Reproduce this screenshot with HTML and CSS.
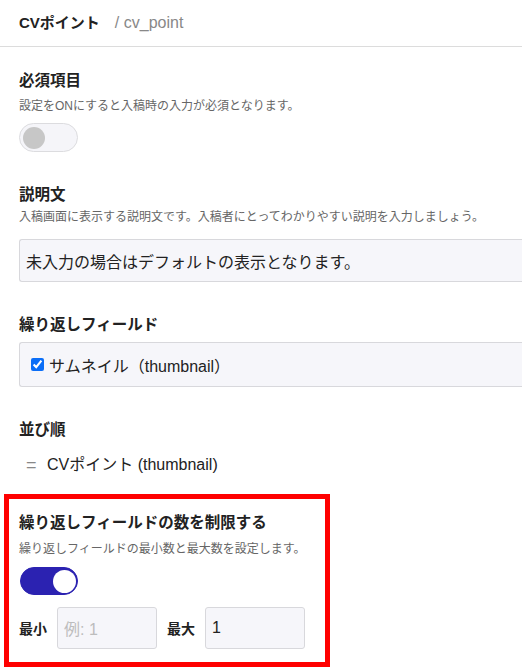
FILE: index.html
```html
<!DOCTYPE html>
<html lang="ja">
<head>
<meta charset="utf-8">
<link rel="stylesheet" href="styles.css">
</head>
<body>
<header class="head">
  <span class="head-name">CVポイント</span>
  <span class="head-key">/ cv_point</span>
</header>

<main class="content">
  <section class="sec sec-first">
    <h2 class="title t-req">必須項目</h2>
    <p class="desc d-req">設定をONにすると入稿時の入力が必須となります。</p>
    <span class="toggle"><span class="knob"></span></span>
  </section>

  <section class="sec">
    <h2 class="title t-note">説明文</h2>
    <p class="desc d-note">入稿画面に表示する説明文です。入稿者にとってわかりやすい説明を入力しましょう。</p>
    <div class="field wide">未入力の場合はデフォルトの表示となります。</div>
  </section>

  <section class="sec">
    <h2 class="title t-rep">繰り返しフィールド</h2>
    <label class="field wide check-box">
      <input type="checkbox" class="chk" checked>
      <span>サムネイル（thumbnail）</span>
    </label>
  </section>

  <section class="sec">
    <h2 class="title t-sort">並び順</h2>
    <div class="sort-item"><span class="grip">=</span><span>CVポイント (thumbnail)</span></div>
  </section>

  <section class="limit">
    <h2 class="title t-lim">繰り返しフィールドの数を制限する</h2>
    <p class="desc d-lim">繰り返しフィールドの最小数と最大数を設定します。</p>
    <span class="toggle on"><span class="knob"></span></span>
    <div class="range">
      <span class="range-label">最小</span>
      <div class="field num placeholder">例: 1</div>
      <span class="range-label">最大</span>
      <div class="field num">1</div>
    </div>
  </section>
</main>
</body>
</html>
```

FILE: styles.css
```css
html, body {
  margin: 0;
  padding: 0;
  background: #fff;
  overflow: hidden;
}
body {
  width: 522px;
  height: 672px;
  font-family: "Liberation Sans", "Noto Sans CJK JP", sans-serif;
  color: #222;
}
.head {
  box-sizing: border-box;
  height: 47px;
  border-bottom: 1px solid #dcdcdc;
  padding: 13px 0 0 19px;
  display: flex;
  align-items: flex-start;
  line-height: 20px;
}
.head-name {
  font-size: 15px;
  font-weight: 700;
  color: #222;
}
.head-key {
  margin-left: 15px;
  font-size: 16px;
  color: #888;
}
.content {
  padding-left: 19px;
}
.sec {
  margin-top: 33px;
}
.sec-first {
  margin-top: 24px;
}
.title {
  margin: 0;
  font-size: 15.5px;
  line-height: 20px;
  font-weight: 700;
  color: #222;
}
.desc {
  margin: 0;
  font-size: 12px;
  line-height: 16px;
  color: #666;
}
.t-req { margin-bottom: 7px; }
.d-req { margin-bottom: 9px; }
.t-note { margin-bottom: 4px; }
.d-note { margin-bottom: 14px; }
.t-rep { margin-bottom: 7px; }
.t-sort { margin-bottom: 15px; }

.toggle {
  display: block;
  box-sizing: border-box;
  width: 59px;
  height: 29px;
  border: 1px solid #dcdcdf;
  border-radius: 15px;
  background: #f5f5f9;
  position: relative;
}
.toggle .knob {
  position: absolute;
  left: 3px;
  top: 3px;
  width: 22px;
  height: 22px;
  border-radius: 50%;
  background: #c7c7c7;
}
.toggle.on {
  width: 58px;
  height: 28px;
  margin-left: 1px;
  background: #2b22b1;
  border-color: #2b22b1;
}
.toggle.on .knob {
  left: auto;
  right: 1px;
  top: 2px;
  width: 23px;
  height: 23px;
  background: #fff;
}

.field {
  box-sizing: border-box;
  background: #f6f6fa;
  border: 1px solid #d8d8dc;
  border-radius: 3px;
  font-size: 16px;
  color: #222;
}
.wide {
  width: 503px;
  height: 43px;
  display: flex;
  align-items: center;
  padding-left: 6px;
  border-right: 0;
  border-radius: 3px 0 0 3px;
}
.check-box {
  height: 45px;
  padding-left: 10px;
}
.chk {
  width: 13px;
  height: 13px;
  margin: 0 5px 0 1px;
  accent-color: #0b6ef7;
}
.sort-item {
  display: flex;
  align-items: center;
  line-height: 20px;
  font-size: 16px;
  color: #222;
  padding-left: 7px;
}
.grip {
  color: #888;
  width: 21px;
  font-size: 18px;
}

.limit {
  margin: 19px 0 0 -15px;
  width: 326px;
  box-sizing: border-box;
  border: 5px solid #ff0000;
  padding: 14px 0 13px 10px;
}
.t-lim { margin-bottom: 8px; }
.d-lim { margin-bottom: 10px; }
.range {
  margin-top: 12px;
  display: flex;
  align-items: center;
  gap: 10px;
}
.range-label {
  font-size: 14px;
  font-weight: 700;
  color: #222;
}
.num {
  width: 100px;
  height: 42px;
  display: flex;
  align-items: center;
  padding-left: 6px;
}
.placeholder {
  color: #bdbdbd;
}
```
